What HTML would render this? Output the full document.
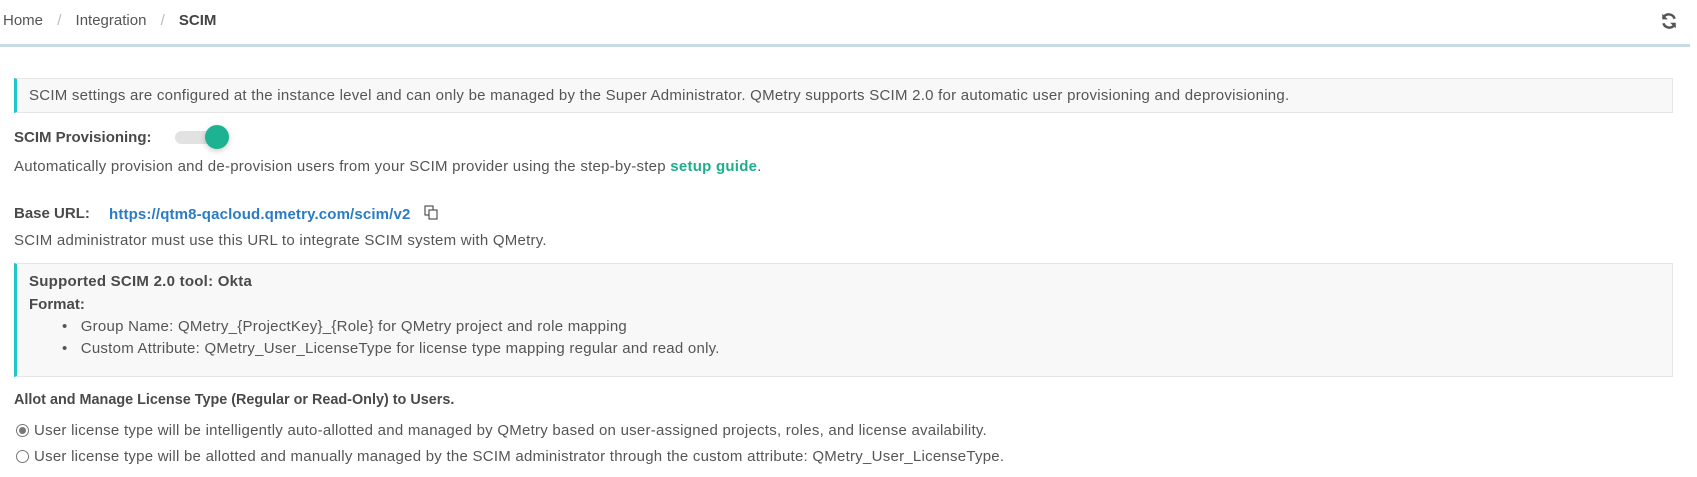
<!DOCTYPE html>
<html><head><style>
body{margin:0;width:1697px;height:477px;background:#fff;font-family:"Liberation Sans",sans-serif;font-size:15px;letter-spacing:.25px;color:#555;position:relative;overflow:hidden}
.a{position:absolute;white-space:nowrap}
b{color:#4a4a4a}
</style></head><body>
<div class="a" style="left:3px;top:12px;font-size:15px;letter-spacing:0;color:#555">Home <span style="color:#bbb;margin:0 10px">/</span> Integration <span style="color:#bbb;margin:0 10px">/</span> <b style="color:#444">SCIM</b></div>
<svg class="a" style="left:1660px;top:12px" width="18" height="18" viewBox="0 0 16 16"><path d="M13 6A5.5 5.5 0 0 0 3.2 4.5" fill="none" stroke="#555" stroke-width="2.2"/><path d="M2 1.5v5h5z" fill="#555"/><path d="M3 10a5.5 5.5 0 0 0 9.8 1.5" fill="none" stroke="#555" stroke-width="2.2"/><path d="M14 14.5v-5h-5z" fill="#555"/></svg>
<div class="a" style="left:0;top:44px;width:1690px;height:3px;background:#c7dbe5"></div>
<div class="a" style="left:14px;top:78px;width:1655px;height:33px;background:#f8f8f8;border:1px solid #e6e6e6;border-left:3px solid #22c5cc"></div>
<div class="a" style="left:29px;top:87px">SCIM settings are configured at the instance level and can only be managed by the Super Administrator. QMetry supports SCIM 2.0 for automatic user provisioning and deprovisioning.</div>
<div class="a" style="left:14px;top:129px;letter-spacing:0"><b>SCIM Provisioning:</b></div>
<div class="a" style="left:175px;top:131px;width:40px;height:13px;border-radius:7px;background:#e2e2e2"></div>
<div class="a" style="left:205px;top:125px;width:24px;height:24px;border-radius:50%;background:#1db392;box-shadow:0 2px 6px rgba(0,0,0,.2)"></div>
<div class="a" style="left:14px;top:158px">Automatically provision and de-provision users from your SCIM provider using the step-by-step <b style="color:#1fae8c">setup guide</b>.</div>
<div class="a" style="left:14px;top:205px;letter-spacing:0"><b>Base URL:</b></div>
<div class="a" style="left:109px;top:205px;color:#2a7cc7;font-weight:bold;letter-spacing:.15px">https://qtm8-qacloud.qmetry.com/scim/v2<svg style="margin-left:14px;vertical-align:-1px" width="15" height="15" viewBox="0 0 15 15" fill="#fff" stroke="#444" stroke-width="1.1"><rect x="1" y="1" width="8" height="9"/><rect x="5" y="5" width="8" height="9"/></svg></div>
<div class="a" style="left:14px;top:232px">SCIM administrator must use this URL to integrate SCIM system with QMetry.</div>
<div class="a" style="left:14px;top:263px;width:1655px;height:112px;background:#f8f8f8;border:1px solid #e6e6e6;border-left:3px solid #22c5cc"></div>
<div class="a" style="left:29px;top:273px"><b>Supported SCIM 2.0 tool: Okta</b></div>
<div class="a" style="left:29px;top:296px;letter-spacing:0"><b>Format:</b></div>
<div class="a" style="left:62px;top:318px">•&nbsp;&nbsp;&nbsp;Group Name: QMetry_{ProjectKey}_{Role} for QMetry project and role mapping</div>
<div class="a" style="left:62px;top:340px">•&nbsp;&nbsp;&nbsp;Custom Attribute: QMetry_User_LicenseType for license type mapping regular and read only.</div>
<div class="a" style="left:14px;top:392px;font-size:14.4px;letter-spacing:0"><b>Allot and Manage License Type (Regular or Read-Only) to Users.</b></div>
<div class="a" style="left:16px;top:424px;width:11px;height:11px;border:1px solid #777;border-radius:50%;background:#fff"><div style="margin:2px;width:7px;height:7px;border-radius:50%;background:#777"></div></div>
<div class="a" style="left:34px;top:422px">User license type will be intelligently auto-allotted and managed by QMetry based on user-assigned projects, roles, and license availability.</div>
<div class="a" style="left:16px;top:450px;width:11px;height:11px;border:1px solid #777;border-radius:50%;background:#fff"></div>
<div class="a" style="left:34px;top:448px">User license type will be allotted and manually managed by the SCIM administrator through the custom attribute: QMetry_User_LicenseType.</div>
</body></html>
